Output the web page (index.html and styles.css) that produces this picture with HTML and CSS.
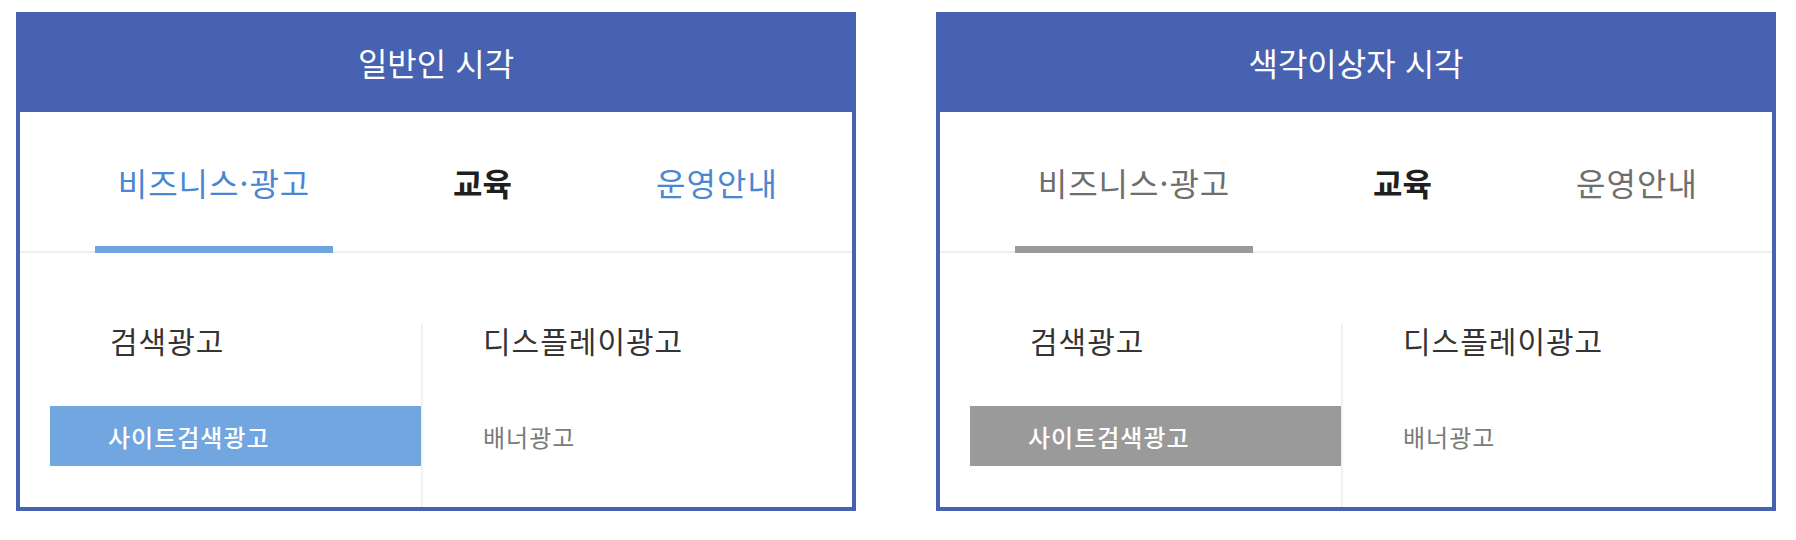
FILE: index.html
```html
<!DOCTYPE html>
<html lang="ko">
<head>
<meta charset="utf-8">
<title>시각 비교</title>
<link rel="stylesheet" href="styles.css">
</head>
<body>
<div class="page">
  <section class="panel">
    <div class="panel-head">일반인 시각</div>
    <div class="panel-body">
      <nav class="tabs">
        <a class="tab tab-1 active">비즈니스·광고</a>
        <a class="tab tab-2 strong">교육</a>
        <a class="tab tab-3">운영안내</a>
      </nav>
      <div class="menu">
        <div class="col">
          <div class="col-title">검색광고</div>
          <div class="col-item selected">사이트검색광고</div>
        </div>
        <div class="col col-sep">
          <div class="col-title">디스플레이광고</div>
          <div class="col-item">배너광고</div>
        </div>
      </div>
    </div>
  </section>
  <section class="panel gray">
    <div class="panel-head">색각이상자 시각</div>
    <div class="panel-body">
      <nav class="tabs">
        <a class="tab tab-1 active">비즈니스·광고</a>
        <a class="tab tab-2 strong">교육</a>
        <a class="tab tab-3">운영안내</a>
      </nav>
      <div class="menu">
        <div class="col">
          <div class="col-title">검색광고</div>
          <div class="col-item selected">사이트검색광고</div>
        </div>
        <div class="col col-sep">
          <div class="col-title">디스플레이광고</div>
          <div class="col-item">배너광고</div>
        </div>
      </div>
    </div>
  </section>
</div>
</body>
</html>
```
FILE: styles.css
```css
* { box-sizing: border-box; }
html, body { margin: 0; padding: 0; background: #fff; }
body {
  font-family: "Noto Sans CJK KR", "Noto Sans", sans-serif;
  color: #333;
}
.page {
  display: flex;
  gap: 80px;
  padding: 12px 0 0 16px;
}
.panel {
  width: 840px;
  display: flex;
  flex-direction: column;
}
.panel-head {
  height: 100px;
  background: #4762b1;
  color: #fff;
  font-size: 32px;
  display: flex;
  align-items: center;
  justify-content: center;
  letter-spacing: 0;
}
.panel-body {
  border: 4px solid #4762b1;
  border-top: 0;
  height: 399px;
  display: flex;
  flex-direction: column;
}
.tabs {
  display: flex;
  height: 141px;
  border-bottom: 2px solid #efefef;
  padding-left: 75px;
}
.tab {
  position: relative;
  display: flex;
  align-items: center;
  justify-content: center;
  font-size: 32px;
  color: #4a87d0;
  letter-spacing: 1px;
  white-space: nowrap;
}
.tab-1 { width: 238px; }
.tab-2 { width: 103px; margin-left: 98px; }
.tab-3 { width: 164px; margin-left: 101px; }
.tab.strong { color: #1f1f1f; font-weight: 700; letter-spacing: 0; }
.tab.active::after {
  content: "";
  position: absolute;
  left: 0;
  right: 0;
  bottom: -2px;
  height: 7px;
  background: #6fa4de;
}
.menu {
  flex: 1;
  display: flex;
  padding: 70px 0 0 30px;
}
.col {
  width: 371px;
  display: flex;
  flex-direction: column;
}
.col-sep {
  border-left: 2px solid #f2f2f2;
  width: 420px;
}
.col-title {
  font-size: 30px;
  line-height: 34px;
  color: #333;
  padding-left: 60px;
  margin-bottom: 49px;
  letter-spacing: 1px;
  white-space: nowrap;
}
.col-item {
  height: 60px;
  display: flex;
  align-items: center;
  padding-left: 58px;
  font-size: 24px;
  color: #7a7a7a;
  letter-spacing: 1px;
}
.col-sep .col-item { padding-left: 60px; }
.col-item.selected {
  background: #72a6e0;
  color: #fff;
  font-weight: 500;
}
.gray .tab { color: #6e6e6e; }
.gray .tab.strong { color: #1f1f1f; }
.gray .tab.active::after { background: #999; }
.gray .col-item.selected { background: #9a9a9a; }
```
